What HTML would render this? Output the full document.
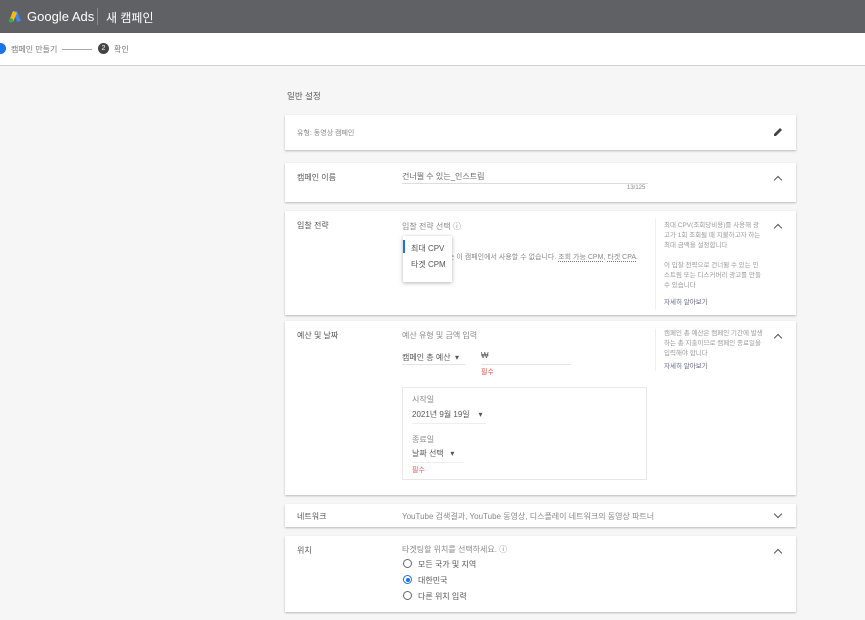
<!DOCTYPE html>
<html><head><meta charset="utf-8"><style>
*{box-sizing:border-box;margin:0;padding:0}
body{width:865px;height:620px;overflow:hidden;background:#f6f6f6;font-family:"Liberation Sans","Noto Sans CJK KR",sans-serif;color:#555;font-size:8px;position:relative}
.hdr{position:absolute;left:0;top:0;width:865px;height:33px;background:#5f6165;color:#fff}
.steps{position:absolute;left:0;top:33px;width:865px;height:33px;background:#fff;border-bottom:1px solid #d0d0d0}
.card{position:absolute;left:285px;width:511px;background:#fff;box-shadow:0 1px 2px rgba(0,0,0,.25)}
.a{position:absolute}
.lbl{font-size:8px;color:#555}
.g{color:#888}
.chev{position:absolute;right:15px;width:6px;height:6px;border-left:1.5px solid #555;border-top:1.5px solid #555;transform:rotate(45deg)}
.chevd{position:absolute;right:15px;width:6px;height:6px;border-right:1.5px solid #555;border-bottom:1.5px solid #555;transform:rotate(45deg)}
.ul{position:absolute;height:1px;background:#e4e4e4}
.red{color:#d55;font-size:7px}
.radio{position:absolute;width:9px;height:9px;border:1.3px solid #666;border-radius:50%}
</style></head><body>
<div class="hdr">
<svg class="a" style="left:8px;top:10px" width="14" height="13" viewBox="0 0 14 13"><path d="M5 1 L9 1 L13 11 L9 12 Z" fill="#4285f4"/><path d="M5 1 L9 3 L5 12 L1 11 Z" fill="#fbbc04"/><circle cx="3" cy="10.5" r="2.2" fill="#34a853"/></svg>
<div class="a" style="left:27px;top:9px;font-size:13px">Google Ads</div>
<div class="a" style="left:97px;top:8px;width:1px;height:17px;background:#888"></div>
<div class="a" style="left:106px;top:9px;font-size:12px">새 캠페인</div>
</div>
<div class="steps">
<div class="a" style="left:-5px;top:10px;width:11px;height:11px;border-radius:50%;background:#1a73e8"></div>
<div class="a" style="left:11px;top:11px;color:#777">캠페인 만들기</div>
<div class="a" style="left:62px;top:16px;width:30px;height:1px;background:#aaa"></div>
<div class="a" style="left:98px;top:10px;width:11px;height:11px;border-radius:50%;background:#444;color:#fff;font-size:7px;text-align:center;line-height:11px">2</div>
<div class="a" style="left:114px;top:11px;color:#777">확인</div>
</div>
<div class="a" style="left:287px;top:90px;font-size:8.5px;color:#555">일반 설정</div>

<div class="card" style="top:115px;height:35px"><div class="a g" style="left:12px;top:13px;font-size:7px">유형: 동영상 캠페인</div>
<svg class="a" style="right:13px;top:12px" width="10" height="10" viewBox="0 0 10 10"><path d="M1 9 L1 7 L7 1 L9 3 L3 9 Z" fill="#444"/></svg></div>

<div class="card" style="top:163px;height:39px"><div class="a lbl" style="left:12px;top:9px">캠페인 이름</div>
<div class="a" style="left:117px;top:8px;color:#666">건너뛸 수 있는_인스트림</div>
<div class="ul" style="left:117px;top:20px;width:246px;background:#ddd"></div>
<div class="a g" style="left:342px;top:22px;font-size:6px">13/125</div>
<div class="chev" style="top:14px"></div></div>

<div class="card" style="top:211px;height:104px"><div class="a lbl" style="left:12px;top:9px">입찰 전략</div>
<div class="a g" style="left:117px;top:10px">입찰 전략 선택 ⓘ</div>
<div class="a g" style="left:163px;top:41px;font-size:7px">는 이 캠페인에서 사용할 수 없습니다. <span style="border-bottom:1px dotted #777">조회 가능 CPM</span>, <span style="border-bottom:1px dotted #777">타겟 CPA</span>.</div>
<div class="a" style="left:118px;top:25px;width:49px;height:46px;background:#fff;box-shadow:0 1px 4px rgba(0,0,0,.3)">
<div class="a" style="left:0;top:4px;width:2px;height:13px;background:#1a73e8"></div>
<div class="a" style="left:8px;top:7px;color:#555">최대 CPV</div>
<div class="a" style="left:8px;top:23px;color:#555">타겟 CPM</div></div>
<div class="a" style="left:370px;top:8px;width:1px;height:90px;background:#eee"></div>
<div class="a g" style="left:379px;top:10px;font-size:6.5px;line-height:10px;width:100px;color:#999">최대 CPV(조회당비용)를 사용해 광고가 1회 조회될 때 지불하고자 하는 최대 금액을 설정합니다<br><br>이 입찰 전략으로 건너뛸 수 있는 인스트림 또는 디스커버리 광고를 만들 수 있습니다</div>
<div class="a" style="left:379px;top:85px;font-size:6.5px;color:#668">자세히 알아보기</div>
<div class="chev" style="top:14px"></div></div>

<div class="card" style="top:321px;height:174px"><div class="a lbl" style="left:12px;top:9px">예산 및 날짜</div>
<div class="a g" style="left:117px;top:9px">예산 유형 및 금액 입력</div>
<div class="a" style="left:117px;top:31px;color:#555">캠페인 총 예산 &nbsp;▾</div>
<div class="ul" style="left:117px;top:43px;width:63px"></div>
<div class="a" style="left:196px;top:30px;color:#555">₩</div>
<div class="ul" style="left:196px;top:43px;width:90px"></div>
<div class="a red" style="left:196px;top:46px">필수</div>
<div class="a" style="left:117px;top:66px;width:245px;height:93px;border:1px solid #e8e8e8">
<div class="a g" style="left:9px;top:6px">시작일</div>
<div class="a" style="left:9px;top:21px;color:#555">2021년 9월 19일 &nbsp;&nbsp;&nbsp;▾</div>
<div class="ul" style="left:9px;top:35px;width:74px;background:#eee"></div>
<div class="a g" style="left:9px;top:46px">종료일</div>
<div class="a" style="left:9px;top:60px;color:#555">날짜 선택 &nbsp;&nbsp;▾</div>
<div class="ul" style="left:9px;top:74px;width:52px;background:#eee"></div>
<div class="a red" style="left:9px;top:77px">필수</div></div>
<div class="a" style="left:370px;top:8px;width:1px;height:42px;background:#eee"></div>
<div class="a g" style="left:379px;top:8px;font-size:6.5px;line-height:10px;width:104px;color:#999">캠페인 총 예산은 캠페인 기간에 발생하는 총 지출이므로 캠페인 종료일을 입력해야 합니다</div>
<div class="a" style="left:379px;top:39px;font-size:6.5px;color:#668">자세히 알아보기</div>
<div class="chev" style="top:14px"></div></div>

<div class="card" style="top:504px;height:23px"><div class="a lbl" style="left:12px;top:7px">네트워크</div>
<div class="a g" style="left:117px;top:7px">YouTube 검색결과, YouTube 동영상, 디스플레이 네트워크의 동영상 파트너</div>
<div class="chevd" style="top:7px"></div></div>

<div class="card" style="top:536px;height:76px"><div class="a lbl" style="left:12px;top:9px">위치</div>
<div class="a g" style="left:117px;top:8px">타겟팅할 위치를 선택하세요. ⓘ</div>
<div class="radio" style="left:118px;top:23px"></div><div class="a" style="left:133px;top:23px;color:#555">모든 국가 및 지역</div>
<div class="radio" style="left:118px;top:39px;border-color:#1a73e8"><div class="a" style="left:1.5px;top:1.5px;width:4px;height:4px;border-radius:50%;background:#1a73e8"></div></div><div class="a" style="left:133px;top:39px;color:#555">대한민국</div>
<div class="radio" style="left:118px;top:55px"></div><div class="a" style="left:133px;top:55px;color:#555">다른 위치 입력</div>
<div class="chev" style="top:14px"></div></div>
</body></html>
